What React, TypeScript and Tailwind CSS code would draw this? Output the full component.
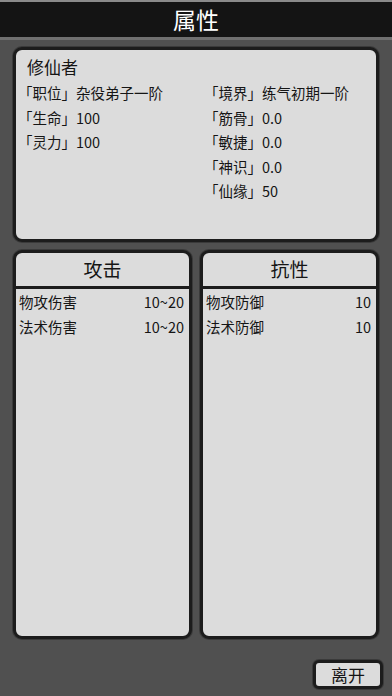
import React from 'react';

const font = { fontFamily: '"Noto Sans CJK SC", "Noto Sans", sans-serif' };

function Panel({ title, rows }: { title: string; rows: [string, string][] }) {
  return (
    <div className="flex-1 flex flex-col rounded-[9px] border-[3px] border-[#1c1c1c] bg-[#dcdcdc] shadow-[0_0_0_1px_#3a3a3a] overflow-hidden">
      <div className="h-[36px] flex items-center justify-center border-b-[3px] border-[#1c1c1c] text-[19px] text-[#151515]">
        {title}
      </div>
      <div className="flex flex-col pl-[3px] pr-[5px]">
        {rows.map(([k, v]) => (
          <div key={k} className="h-[25px] flex items-center justify-between text-[14.5px] text-[#151515]">
            <span>{k}</span>
            <span>{v}</span>
          </div>
        ))}
      </div>
    </div>
  );
}

export default function App() {
  const left = [
    ['「职位」', '杂役弟子一阶'],
    ['「生命」', '100'],
    ['「灵力」', '100'],
  ];
  const right = [
    ['「境界」', '练气初期一阶'],
    ['「筋骨」', '0.0'],
    ['「敏捷」', '0.0'],
    ['「神识」', '0.0'],
    ['「仙缘」', '50'],
  ];

  return (
    <div className="w-[392px] h-[696px] flex flex-col bg-[#505050] overflow-hidden" style={font}>
      <div className="h-[2px] bg-[#8a8a8a]" />
      <div className="h-[35px] bg-[#141414] flex items-center justify-center text-white text-[23px]">
        属性
      </div>
      <div className="h-[3px] bg-[#707070]" />

      <div className="flex flex-col px-[13px] pt-[7px]">
        <div className="h-[195px] rounded-[9px] border-[3px] border-[#1c1c1c] bg-[#dcdcdc] shadow-[0_0_0_1px_#3a3a3a] pl-[11px] pr-[8px] pt-[5px] text-[#151515]">
          <div className="h-[24px] flex items-center text-[17px]">修仙者</div>
          <div className="flex mt-[2px]">
            <div className="w-[186px] flex flex-col">
              {left.map(([k, v]) => (
                <div key={k} className="h-[24.5px] flex items-center text-[14.5px] ml-[-9px]">
                  <span>{k}</span>
                  <span>{v}</span>
                </div>
              ))}
            </div>
            <div className="flex flex-col">
              {right.map(([k, v]) => (
                <div key={k} className="h-[24.5px] flex items-center text-[14.5px] ml-[-9px]">
                  <span>{k}</span>
                  <span>{v}</span>
                </div>
              ))}
            </div>
          </div>
        </div>

        <div className="h-[389px] flex gap-[8px] mt-[8px]">
          <Panel title="攻击" rows={[['物攻伤害', '10~20'], ['法术伤害', '10~20']]} />
          <Panel title="抗性" rows={[['物攻防御', '10'], ['法术防御', '10']]} />
        </div>

        <div className="flex justify-end mt-[21px] mr-[-4px]">
          <div className="w-[70px] h-[29px] rounded-[6px] border-[3px] border-[#1c1c1c] bg-[#dcdcdc] shadow-[0_0_0_1px_#3a3a3a] flex items-center justify-center text-[17px] text-[#151515]">
            离开
          </div>
        </div>
      </div>
    </div>
  );
}
